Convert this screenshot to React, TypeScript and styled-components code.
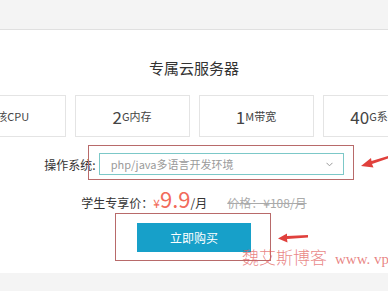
import React from 'react';
import styled, { createGlobalStyle } from 'styled-components';

const GlobalStyle = createGlobalStyle`
  body {
    margin: 0;
    font-family: "Noto Sans CJK SC", "Liberation Sans", sans-serif;
    color: #333;
  }
`;

const Page = styled.div`
  position: relative;
  width: 388px;
  height: 291px;
  overflow: hidden;
  display: flex;
  flex-direction: column;
  background: #fff;
`;

const TopBand = styled.div`
  height: 29px;
  background: #f4f4f4;
  border-bottom: 1px solid #e0e0e0;
  flex-shrink: 0;
`;

const Main = styled.div`
  flex: 1;
  display: flex;
  flex-direction: column;
  align-items: center;
  padding-top: 28px;
`;

const BottomBand = styled.div`
  height: 18px;
  background: #f4f4f4;
  flex-shrink: 0;
`;

const Title = styled.div`
  font-size: 15px;
  line-height: 20px;
  color: #333;
  margin-bottom: 17px;
`;

const CardRow = styled.div`
  width: 100%;
  display: flex;
  justify-content: center;
  gap: 9px;
  overflow: hidden;
`;

const Card = styled.div`
  flex-shrink: 0;
  width: 115px;
  height: 42px;
  box-sizing: border-box;
  border: 1px solid #e4e4e4;
  display: flex;
  align-items: center;
  justify-content: center;
  white-space: nowrap;
  font-size: 11px;
  color: #444;
`;

const Big = styled.span`
  font-size: 17px;
  line-height: 1;
`;

const OsRow = styled.div`
  margin-top: 16px;
  display: flex;
  align-items: center;
  gap: 3px;
`;

const Label = styled.span`
  font-size: 12px;
  color: #333;
`;

const Select = styled.div`
  width: 245px;
  height: 22px;
  box-sizing: border-box;
  border: 1px solid #7cc8c8;
  display: flex;
  align-items: center;
  justify-content: space-between;
  padding: 0 10px 0 11px;
  font-size: 11px;
  color: #9a9a9a;
`;

const PriceRow = styled.div`
  margin-top: 11px;
  height: 24px;
  display: flex;
  align-items: baseline;
  font-size: 12px;
  color: #333;
`;

const Yen = styled.span<{ $big?: boolean }>`
  color: #f26b5b;
  font-size: ${p => (p.$big ? '22px' : '12px')};
  line-height: 24px;
`;

const OldPrice = styled.span`
  margin-left: 20px;
  color: #aaa;
  text-decoration: line-through;
`;

const BuyButton = styled.button`
  margin-top: 13px;
  width: 114px;
  height: 29px;
  border: none;
  background: #17a0c9;
  color: #fff;
  font-family: inherit;
  font-size: 12px;
`;

const Mark = styled.div<{ $x: number; $y: number; $w: number; $h: number }>`
  position: absolute;
  left: ${p => p.$x}px;
  top: ${p => p.$y}px;
  width: ${p => p.$w}px;
  height: ${p => p.$h}px;
  box-sizing: border-box;
  border: 1px solid #b86a6a;
`;

const Arrow = styled.svg<{ $x: number; $y: number }>`
  position: absolute;
  left: ${p => p.$x}px;
  top: ${p => p.$y}px;
`;

const Watermark = styled.div`
  position: absolute;
  left: 242px;
  top: 244px;
  white-space: nowrap;
  font-size: 17px;
  font-weight: 300;
  color: rgba(225, 90, 90, 0.75);

  & span {
    font-family: "Liberation Serif", serif;
    font-size: 15px;
    margin-left: 8px;
  }
`;

const cards = [
  { num: '1', rest: '核CPU' },
  { num: '2', rest: 'G内存' },
  { num: '1', rest: 'M带宽' },
  { num: '40', rest: 'G系统盘' },
];

const App: React.FC = () => {
  return (
    <Page>
      <GlobalStyle />
      <TopBand />
      <Main>
        <Title>专属云服务器</Title>
        <CardRow>
          {cards.map((c, i) => (
            <Card key={i}>
              <Big>{c.num}</Big>
              {c.rest}
            </Card>
          ))}
        </CardRow>
        <OsRow>
          <Label>操作系统:</Label>
          <Select>
            php/java多语言开发环境
            <svg width="7" height="5" viewBox="0 0 7 5">
              <path d="M0.5 0.8 L3.5 3.8 L6.5 0.8" fill="none" stroke="#999" strokeWidth="1" />
            </svg>
          </Select>
        </OsRow>
        <PriceRow>
          学生专享价：<Yen>¥</Yen><Yen $big>9.9</Yen>/月
          <OldPrice>价格：¥108/月</OldPrice>
        </PriceRow>
        <BuyButton>立即购买</BuyButton>
      </Main>
      <BottomBand />

      <Mark $x={88} $y={145} $w={266} $h={35} />
      <Mark $x={115} $y={213} $w={156} $h={48} />
      <Arrow $x={355} $y={148} width="33" height="22" viewBox="0 0 33 22">
        <path d="M6 18 L16 10 L16.5 13 L33 8 L33 10.5 L17 16 L18.5 19.5 Z" fill="#e0403c" />
      </Arrow>
      <Arrow $x={276} $y={230} width="34" height="14" viewBox="0 0 34 14">
        <path d="M2 8.5 L11 3.5 L11 6 L32 5 L32 7.5 L11 9 L11.5 12.5 Z" fill="#e0403c" />
      </Arrow>
      <Watermark>
        魏艾斯博客<span>www. vp</span>
      </Watermark>
    </Page>
  );
};

export default App;
